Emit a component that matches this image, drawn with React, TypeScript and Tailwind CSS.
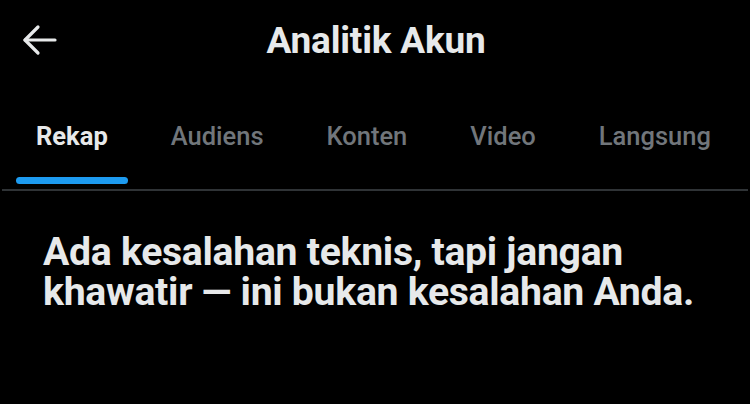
const tabs = ["Rekap", "Audiens", "Konten", "Video", "Langsung"];

function BackArrow() {
  return (
    <svg width="36" height="32" viewBox="0 0 36 32" fill="none" stroke="currentColor" strokeWidth={3.2} strokeLinecap="round" strokeLinejoin="round">
      <path d="M16 3 L3 16 L16 29" />
      <path d="M3 16 H33" />
    </svg>
  );
}

export default function App() {
  return (
    <div className="w-[750px] h-[404px] bg-black text-[#e7e9ea] font-['Roboto',sans-serif] overflow-hidden">
      {/* Header */}
      <div className="relative flex items-center justify-center h-[82px] pb-[1px]">
        <button type="button" className="absolute left-[22px] top-[24px]" aria-label="Back">
          <BackArrow />
        </button>
        <h1 className="text-[37px] font-bold tracking-[-0.2px] pl-[2px]">Analitik Akun</h1>
      </div>

      {/* Tabs */}
      <div className="flex pl-[14px] gap-[23px] border-b-2 border-[#2f3336] mx-[2px]">
        {tabs.map((tab, i) => (
          <div key={tab} className="flex flex-col items-center">
            <span
              className={`px-[20px] pt-[35px] h-[95px] text-[25.5px] ${
                i === 0 ? "font-bold text-[#e7e9ea]" : "font-medium text-[#71767b]"
              }`}
            >
              {tab}
            </span>
            <div className={`h-[7px] w-full rounded-full mb-[5px] ${i === 0 ? "bg-[#1d9bf0]" : "bg-transparent"}`} />
          </div>
        ))}
      </div>

      {/* Error message */}
      <p className="px-[43px] pt-[41px] text-[39.2px] leading-[40px] font-bold tracking-[-0.3px]">
        Ada kesalahan teknis, tapi jangan khawatir — ini bukan kesalahan Anda.
      </p>
    </div>
  );
}
